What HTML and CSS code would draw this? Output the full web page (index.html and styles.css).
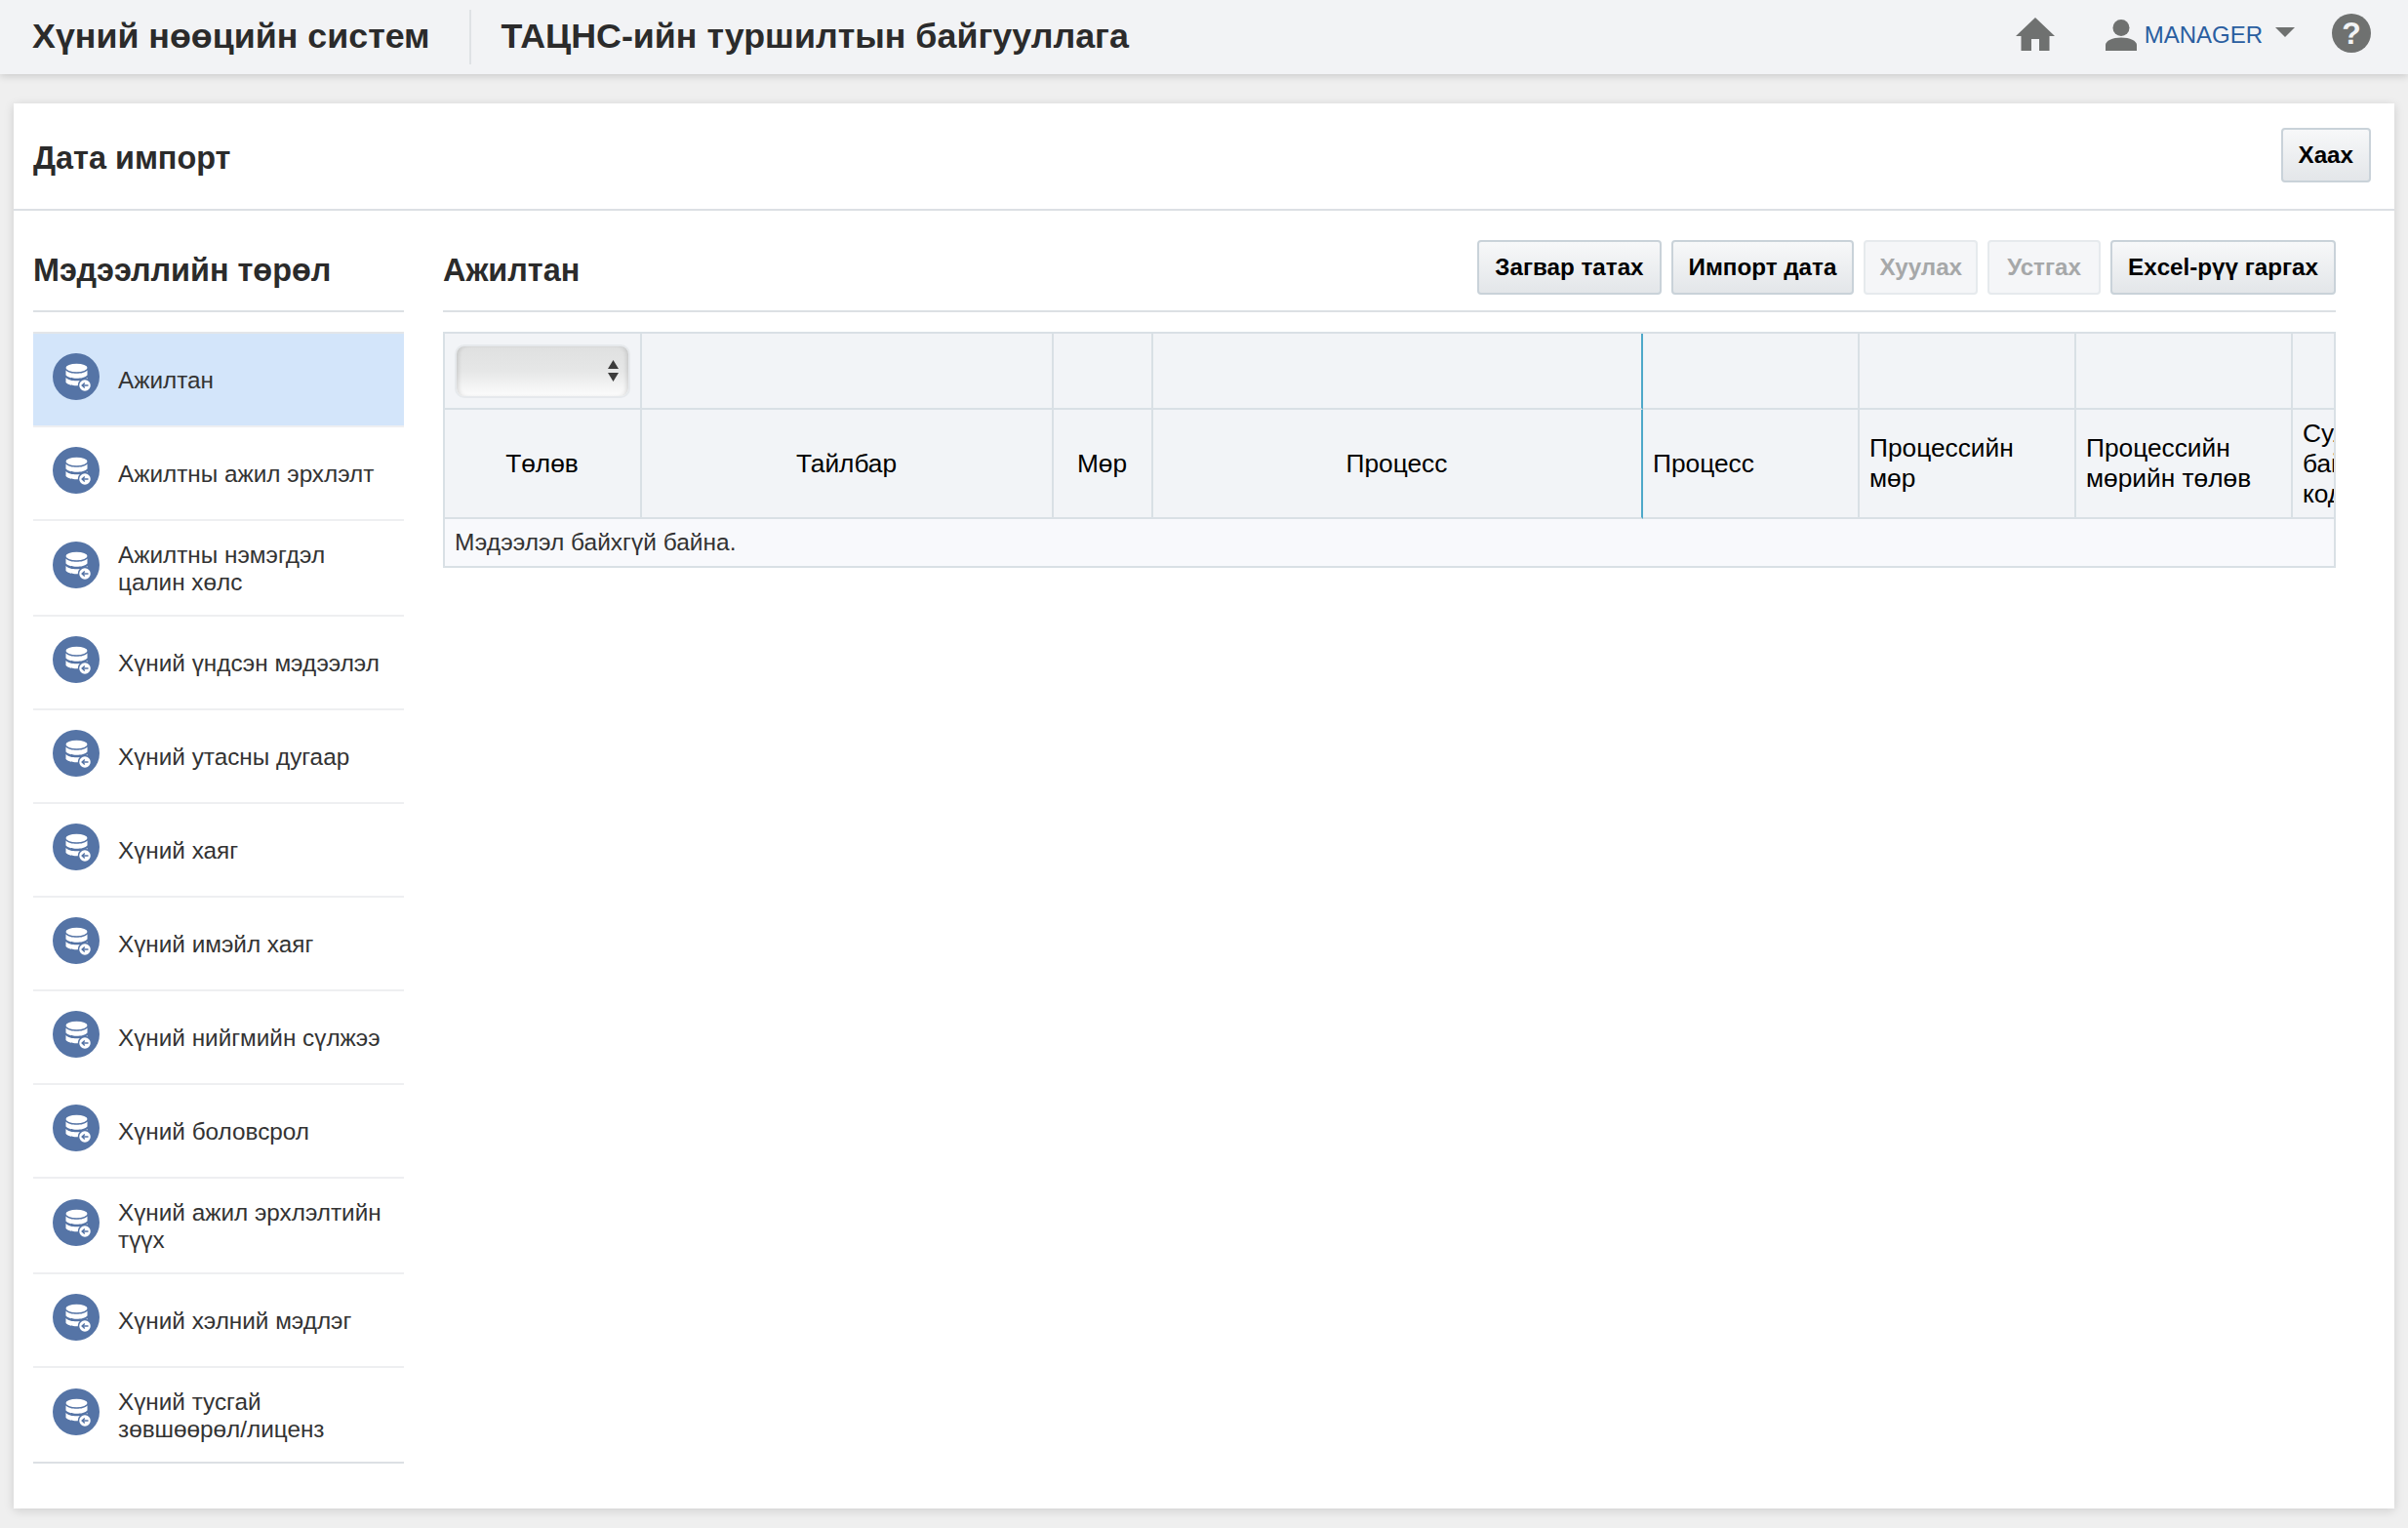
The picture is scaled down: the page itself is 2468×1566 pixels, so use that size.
FILE: index.html
```html
<!DOCTYPE html>
<html lang="mn">
<head>
<meta charset="utf-8">
<title>Дата импорт</title>
<link rel="stylesheet" href="styles.css">
</head>
<body>
<svg class="sprite" width="0" height="0" aria-hidden="true">
  <symbol id="db" viewBox="0 0 48 48">
    <circle cx="24" cy="24" r="24" fill="#5574a6"/>
    <ellipse cx="24.500" cy="15" rx="11" ry="4.200" fill="#fff"/>
    <path d="M13.500 17.500c2 2.400 6.500 3.300 11 3.300s9-.9 11-3.300v5c-2 2.400-6.500 3.300-11 3.300s-9-.9-11-3.300z" fill="#fff"/>
    <path d="M13.500 25c2 2.400 6.500 3.300 11 3.300s9-.9 11-3.300v5c-2 2.400-6.500 3.300-11 3.300s-9-.9-11-3.300z" fill="#fff"/>
    <circle cx="33" cy="33" r="6.500" fill="#fff" stroke="#5574a6" stroke-width="1.500"/>
    <path d="M36.500 33h-6M32.800 30.500 30.200 33l2.600 2.500" fill="none" stroke="#5574a6" stroke-width="1.500"/>
  </symbol>
</svg>

<header class="topbar">
  <div class="brand">Хүний нөөцийн систем</div>
  <div class="org">ТАЦНС-ийн туршилтын байгууллага</div>
  <div class="top-actions">
    <svg class="ico-home" viewBox="0 0 40 34"><path d="M20 0 40 19h-5.500v15H24V22h-8v12H5.500V19H0z" fill="#6f7170"/></svg>
    <div class="user">
      <svg class="ico-user" viewBox="0 0 32 32"><circle cx="16" cy="8.500" r="8.500" fill="#6f7170"/><path d="M0 32v-6c0-4 7-7.500 16-7.500S32 22 32 26v6z" fill="#6f7170"/></svg>
      <span class="user-name">MANAGER</span>
      <span class="caret"></span>
    </div>
    <div class="help">?</div>
  </div>
</header>

<main class="card">
  <div class="card-head">
    <h1>Дата импорт</h1>
    <button class="btn">Хаах</button>
  </div>
  <div class="card-body">
    <aside class="side">
      <div class="section-head">
        <h2 class="section-title">Мэдээллийн төрөл</h2>
      </div>
      <ul class="list">
        <li class="item active"><svg class="db"><use href="#db"/></svg><span>Ажилтан</span></li>
        <li class="item"><svg class="db"><use href="#db"/></svg><span>Ажилтны ажил эрхлэлт</span></li>
        <li class="item"><svg class="db"><use href="#db"/></svg><span>Ажилтны нэмэгдэл цалин хөлс</span></li>
        <li class="item"><svg class="db"><use href="#db"/></svg><span>Хүний үндсэн мэдээлэл</span></li>
        <li class="item"><svg class="db"><use href="#db"/></svg><span>Хүний утасны дугаар</span></li>
        <li class="item"><svg class="db"><use href="#db"/></svg><span>Хүний хаяг</span></li>
        <li class="item"><svg class="db"><use href="#db"/></svg><span>Хүний имэйл хаяг</span></li>
        <li class="item"><svg class="db"><use href="#db"/></svg><span>Хүний нийгмийн сүлжээ</span></li>
        <li class="item"><svg class="db"><use href="#db"/></svg><span>Хүний боловсрол</span></li>
        <li class="item"><svg class="db"><use href="#db"/></svg><span>Хүний ажил эрхлэлтийн түүх</span></li>
        <li class="item"><svg class="db"><use href="#db"/></svg><span>Хүний хэлний мэдлэг</span></li>
        <li class="item last"><svg class="db"><use href="#db"/></svg><span>Хүний тусгай зөвшөөрөл/лиценз</span></li>
      </ul>
    </aside>
    <section class="content">
      <div class="section-head">
        <h2 class="section-title">Ажилтан</h2>
        <div class="btns">
          <button class="btn">Загвар татах</button>
          <button class="btn">Импорт дата</button>
          <button class="btn off">Хуулах</button>
          <button class="btn off">Устгах</button>
          <button class="btn">Excel-рүү гаргах</button>
        </div>
      </div>
      <div class="table-wrap">
        <table class="grid">
          <colgroup>
            <col class="c1"><col class="c2"><col class="c3"><col class="c4"><col class="c5"><col class="c5"><col class="c5"><col class="c5">
          </colgroup>
          <thead>
            <tr class="filter">
              <th><div class="select"><svg class="arrows" viewBox="0 0 11 22"><path d="M5.500 0 11 9H0zM0 13h11l-5.500 9z" fill="#3c3c3c"/></svg></div></th>
              <th></th><th></th><th class="frozen"></th><th></th><th></th><th></th><th></th>
            </tr>
            <tr class="names">
              <th class="center">Төлөв</th>
              <th class="center">Тайлбар</th>
              <th class="center">Мөр</th>
              <th class="center frozen">Процесс</th>
              <th>Процесс</th>
              <th>Процессийн мөр</th>
              <th>Процессийн мөрийн төлөв</th>
              <th>Сул байгууллагын код</th>
            </tr>
          </thead>
          <tbody>
            <tr><td class="empty" colspan="8">Мэдээлэл байхгүй байна.</td></tr>
          </tbody>
        </table>
      </div>
    </section>
  </div>
</main>
</body>
</html>
```

FILE: styles.css
```css
* { box-sizing: border-box; }
html, body { margin: 0; padding: 0; }
body {
  height: 1566px;
  background: #efefef;
  font-family: "Liberation Sans", Arial, sans-serif;
  color: #333;
  overflow: hidden;
}
.sprite { display: block; }
.topbar {
  height: 76px;
  background: #f2f3f5;
  box-shadow: 0 2px 8px rgba(0,0,0,.16);
  display: flex;
  align-items: center;
  padding: 0 38px 0 33px;
}
.brand {
  font-size: 35.800px;
  font-weight: 700;
  color: #2b2b2b;
  padding-right: 40px;
  border-right: 2px solid #dfe2e5;
  height: 56px;
  line-height: 54px;
}
.org {
  font-size: 35.800px;
  font-weight: 700;
  color: #2b2b2b;
  padding-left: 31px;
  height: 56px;
  line-height: 54px;
}
.top-actions {
  margin-left: auto;
  display: flex;
  align-items: center;
}
.ico-home { width: 40px; height: 34px; margin-top: -6px; }
.user { display: flex; align-items: center; margin-left: 52px; }
.ico-user { width: 32px; height: 32px; margin-top: -4px; }
.user-name { font-size: 24px; color: #2a5ea0; margin: -5px 0 0 8px; }
.caret {
  margin-left: 13px;
  margin-top: -10px;
  width: 0; height: 0;
  border-left: 10px solid transparent;
  border-right: 10px solid transparent;
  border-top: 10px solid #6f7170;
}
.help {
  width: 40px; height: 40px;
  margin-left: 38px;
  margin-top: -8px;
  border-radius: 50%;
  background: #6f7170;
  color: #f2f3f5;
  font-size: 32px;
  font-weight: 700;
  line-height: 40px;
  text-align: center;
}
.card {
  margin: 30px 14px 0;
  height: 1440px;
  background: #fff;
  box-shadow: 0 2px 10px rgba(0,0,0,.14);
}
.card-head {
  height: 110px;
  border-bottom: 2px solid #dce0e4;
  display: flex;
  align-items: center;
  justify-content: space-between;
  padding: 0 24px 0 20px;
}
.card-head h1 {
  margin: 4px 0 0;
  font-size: 32.400px;
  font-weight: 700;
  color: #2b2b2b;
}
.card-head .btn { margin-top: -2px; }
.btn {
  height: 56px;
  padding: 0 16px;
  border: 2px solid #c9d2d9;
  border-radius: 4px;
  background: linear-gradient(#f7f8f9, #e3e6e9);
  font-family: inherit;
  font-size: 24.200px;
  font-weight: 700;
  color: #000;
}
.btn.off {
  min-width: 116px;
  background: #f5f6f8;
  border-color: #e6eaed;
  color: #a6a8a9;
  padding: 0 14px;
}
.card-body {
  display: flex;
  padding: 0 60px 0 20px;
  gap: 40px;
}
.side { width: 380px; flex: none; }
.section-title {
  margin: 0;
  font-size: 32.400px;
  font-weight: 700;
  color: #2b2b2b;
}
.list {
  list-style: none;
  margin: 0;
  padding: 0;
  border-top: 2px solid #e3e6e9;
}
.item {
  display: flex;
  align-items: center;
  min-height: 96px;
  padding: 21px 16px 19px 20px;
  border-bottom: 2px solid #eeeff1;
  font-size: 24.300px;
  line-height: 28px;
  color: #333;
}
.item.active { background: #d3e5fa; }
.item.last { border-bottom-color: #dce0e4; }
.db {
  width: 48px;
  height: 48px;
  flex: none;
  margin: -1px 19px 7px 0;
}
.content { flex: 1; min-width: 0; }
.section-head {
  height: 104px;
  border-bottom: 2px solid #dce0e4;
  margin-bottom: 20px;
  display: flex;
  align-items: center;
  justify-content: space-between;
  padding-top: 20px;
}
.btns { display: flex; gap: 10px; margin-top: -6px; }
.table-wrap {
  border: 2px solid #d9e0e5;
  overflow: hidden;
}
.grid {
  border-collapse: separate;
  border-spacing: 0;
  table-layout: fixed;
  width: 2114px;
  font-size: 26.300px;
  color: #000;
}
.c1 { width: 202px; }
.c2 { width: 422px; }
.c3 { width: 102px; }
.c4 { width: 502px; }
.c5 { width: 222px; }
.grid th {
  background: #f2f4f7;
  border-right: 2px solid #d9e0e5;
  border-bottom: 2px solid #d9e0e5;
  font-weight: 400;
  text-align: left;
  padding: 0 11px 0 10px;
  line-height: 31px;
}
.grid th.center { text-align: center; }
.grid th.frozen { border-right-color: #4ea8c9; }
.filter th { height: 78px; }
.names th { height: 112px; }
.select {
  display: flex;
  align-items: center;
  justify-content: flex-end;
  width: 180px;
  height: 55px;
  padding-right: 10px;
  border: 2px solid #e6e9ec;
  border-radius: 10px;
  background: linear-gradient(#dfe0e0, #e6e7e7 50%, #fcfcfc);
  box-shadow: inset 4px 0 4px -2px rgba(0,0,0,.12), inset -4px 0 4px -2px rgba(0,0,0,.12);
}
.arrows { width: 11px; height: 22px; }
.empty {
  height: 48px;
  padding: 0 10px;
  background: #f8f9fc;
  font-size: 24.500px;
  color: #333;
}
```
